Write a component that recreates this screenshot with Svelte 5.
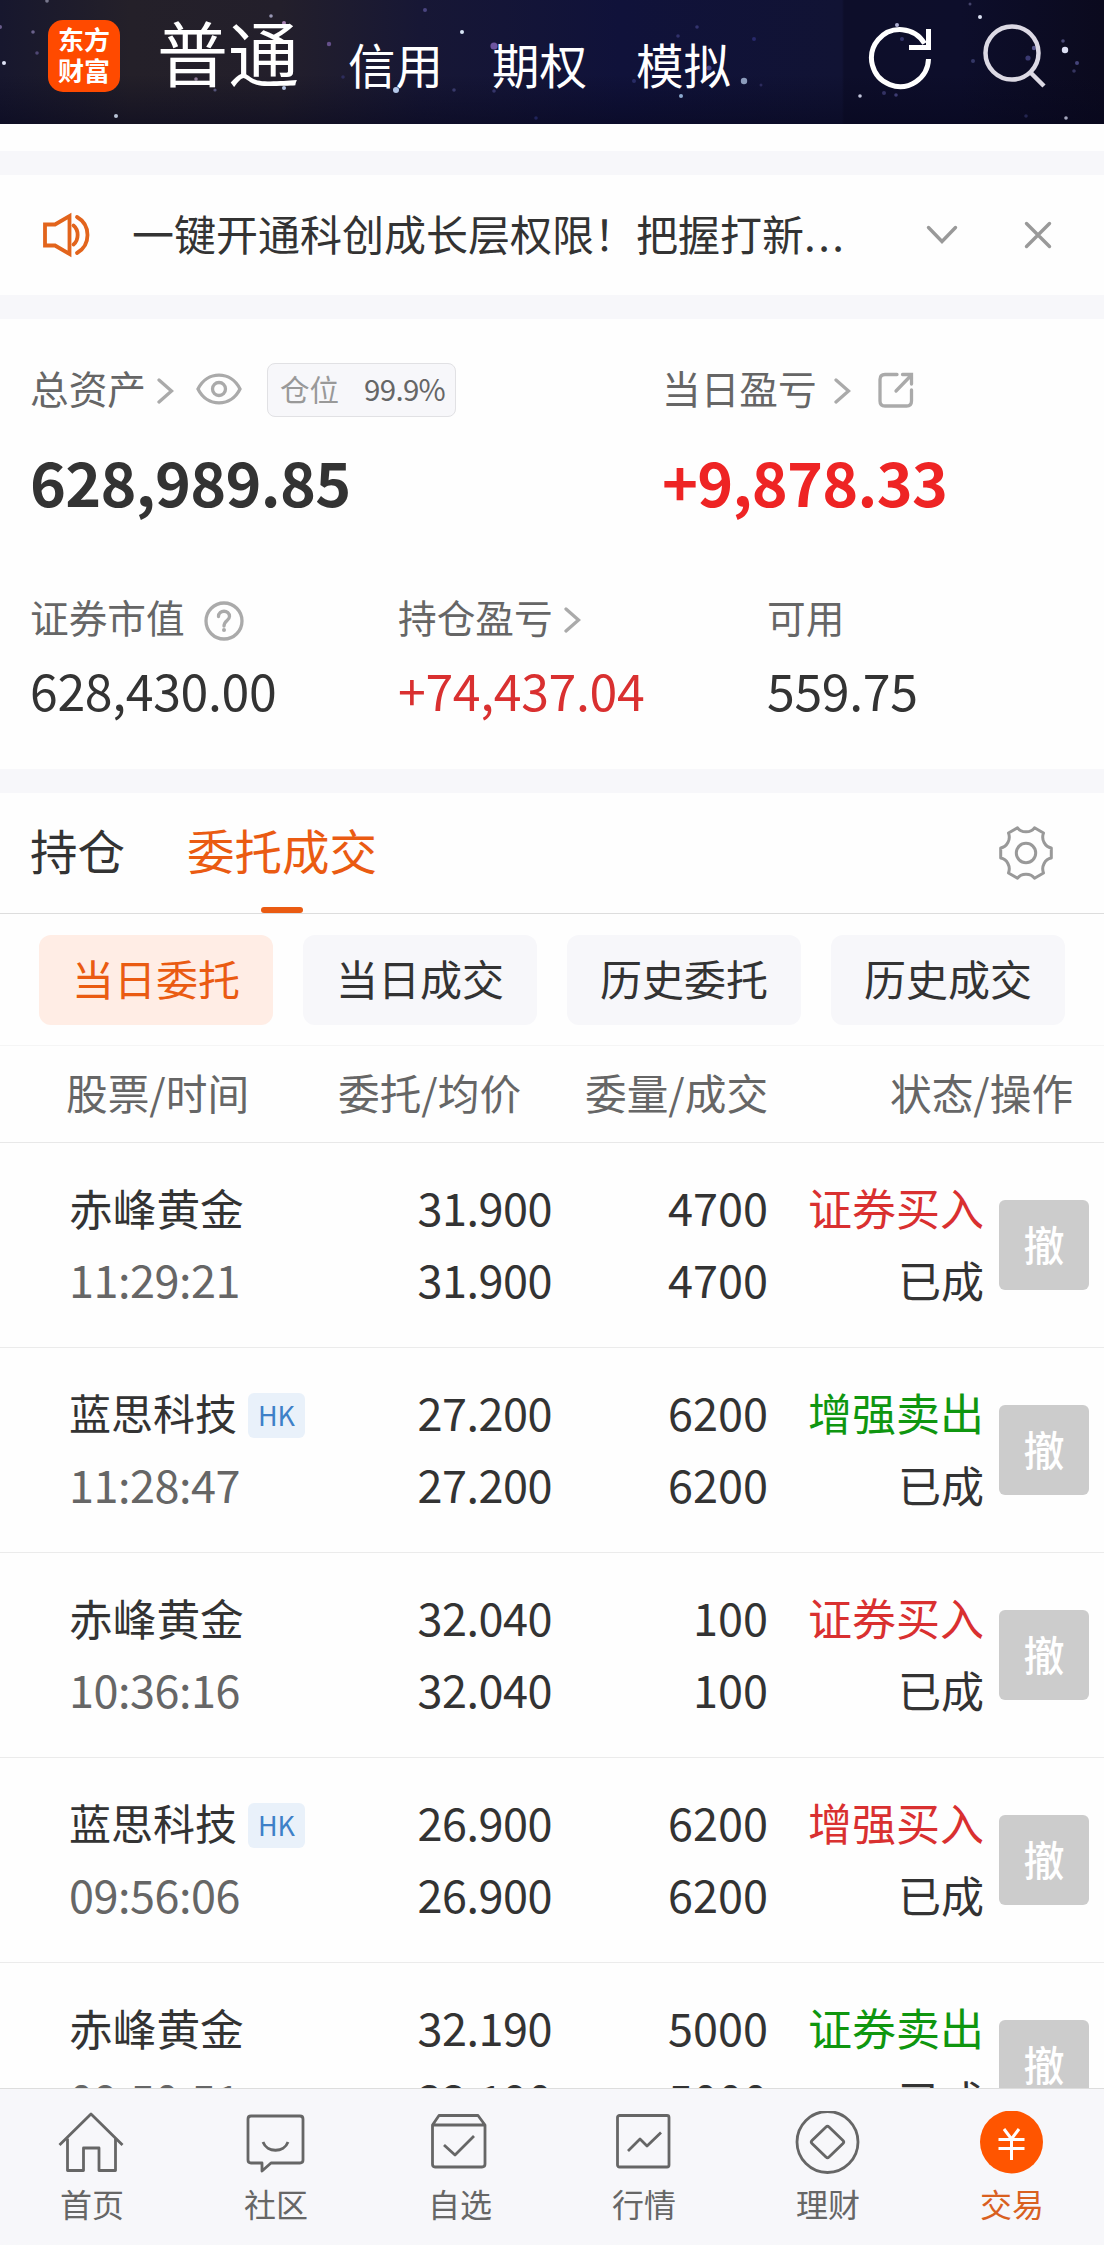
<script lang="ts">
  interface Order {
    name: string;
    hk: boolean;
    time: string;
    price: string;
    volume: string;
    action: string;
    side: 'buy' | 'sell';
  }

  let orders: Order[] = [
    { name: '赤峰黄金', hk: false, time: '11:29:21', price: '31.900', volume: '4700', action: '证券买入', side: 'buy' },
    { name: '蓝思科技', hk: true, time: '11:28:47', price: '27.200', volume: '6200', action: '增强卖出', side: 'sell' },
    { name: '赤峰黄金', hk: false, time: '10:36:16', price: '32.040', volume: '100', action: '证券买入', side: 'buy' },
    { name: '蓝思科技', hk: true, time: '09:56:06', price: '26.900', volume: '6200', action: '增强买入', side: 'buy' },
    { name: '赤峰黄金', hk: false, time: '09:50:51', price: '32.190', volume: '5000', action: '证券卖出', side: 'sell' },
  ];

  let filters = ['当日委托', '当日成交', '历史委托', '历史成交'];
  let activeFilter = '当日委托';

  let navItems = [
    { id: 'home', label: '首页' },
    { id: 'community', label: '社区' },
    { id: 'favorites', label: '自选' },
    { id: 'quotes', label: '行情' },
    { id: 'wealth', label: '理财' },
    { id: 'trade', label: '交易' },
  ];
  let activeNav = 'trade';

  // x, y, radius, color
  const stars: [number, number, number, string][] = [
    [4, 63, 2, '#dfe3f5'], [33, 32, 1.8, '#6b628c'], [37, 53, 1.8, '#4f4774'], [0, 27, 2, '#6a5d8c'],
    [116, 116, 2, '#b9c3d6'], [47, 1, 1.8, '#77778c'], [271, 16, 1.8, '#9a98b5'], [284, 23, 2, '#a884b4'],
    [284, 88, 2, '#b4c4e4'], [196, 79, 1.8, '#8f7b98'], [215, 90, 1.6, '#55547a'], [329, 44, 2.2, '#65508a'],
    [343, 77, 1.8, '#2e2d5c'], [396, 90, 3, '#b4c8ea'], [425, 10, 2, '#4a4580'], [462, 32, 2, '#d8e6f6'],
    [454, 90, 1.8, '#38396a'], [494, 46, 3.6, '#6d559f'], [494, 91, 1.8, '#35356a'], [536, 118, 1.8, '#20245a'],
    [678, 36, 1.8, '#31316b'], [697, 27, 1.8, '#33346e'], [744, 81, 3.2, '#8b9bbb'], [681, 96, 2, '#8ca9cf'],
    [754, 39, 2, '#28296a'], [761, 85, 1.5, '#2c2b5c'], [634, 81, 2, '#292c66'], [709, 68, 2.5, '#44458c'],
    [897, 25, 2, '#aeb0d2'], [902, 39, 2, '#33346b'], [860, 96, 1.8, '#c3c6dc'], [884, 93, 2, '#333263'],
    [896, 95, 1.8, '#3d3c72'], [980, 17, 2, '#dce2f4'], [970, 4, 1.5, '#44436b'], [973, 61, 2, '#343766'],
    [1028, 58, 2.6, '#3a3971'], [1034, 48, 2.2, '#57568d'], [1065, 50, 3.2, '#dcdff4'], [1063, 41, 1.8, '#4a4a77'],
    [1077, 63, 2, '#45447a'], [1074, 71, 1.8, '#35345f'], [1066, 118, 1.8, '#a5a7bd'], [1026, 116, 1.8, '#23254f'],
  ];
</script>

{#snippet arrow()}
  <svg class="arrow" width="18" height="28" viewBox="0 0 18 28">
    <path d="M2 3 L14.500 14 L2 25" />
  </svg>
{/snippet}

<div class="app">
  <header class="topbar">
    <svg class="sky" width="1104" height="124" viewBox="0 0 1104 124">
      {#each stars as [x, y, r, color]}
        <circle cx={x} cy={y} {r} fill={color} />
      {/each}
    </svg>
    <div class="logo">东方财富</div>
    <nav class="accounts">
      <span class="current">普通</span>
      <span>信用</span>
      <span>期权</span>
      <span>模拟</span>
    </nav>
    <svg class="refresh" width="66" height="66" viewBox="0 0 66 66">
      <path d="M60.500 34 A28.500 28.500 0 1 1 56.500 18.500" />
      <path d="M60.500 4 V22.500 H41" />
    </svg>
    <svg class="search" width="66" height="66" viewBox="0 0 66 66">
      <circle cx="31" cy="30" r="26.500" />
      <path d="M49.500 49.500 L63 63" />
    </svg>
  </header>

  <div class="gap first"></div>

  <section class="notice">
    <svg class="speaker" width="50" height="46" viewBox="0 0 50 46">
      <path d="M3 12.500 H13 L27.500 4 V42 L13 33.500 H3 Z" />
      <path d="M31.500 13.500 C37 18 37 28 31.500 32.500" />
      <path d="M35 5 C49 13 49 33 35 41" />
    </svg>
    <p>一键开通科创成长层权限！把握打新<span>...</span></p>
    <svg class="grey down" width="34" height="22" viewBox="0 0 34 22">
      <path d="M3.500 3.500 L17 17.500 L30.500 3.500" />
    </svg>
    <svg class="grey close" width="30" height="30" viewBox="0 0 30 30">
      <path d="M3.500 3.500 L26.500 26.500 M26.500 3.500 L3.500 26.500" />
    </svg>
  </section>

  <div class="gap"></div>

  <section class="assets">
    <div class="main-row">
      <div class="cell">
        <div class="label">
          总资产{@render arrow()}
          <svg class="eye" width="48" height="34" viewBox="0 0 48 34">
            <path d="M3 17 C12 -1.500 36 -1.500 45 17 C36 35.500 12 35.500 3 17 Z" />
            <circle cx="24" cy="17" r="6.500" />
          </svg>
          <div class="position"><span>仓位</span><b>99.9%</b></div>
        </div>
        <div class="big">628,989.85</div>
      </div>
      <div class="cell">
        <div class="label">
          当日盈亏<i></i>{@render arrow()}
          <svg class="share" width="36" height="36" viewBox="0 0 36 36">
            <path d="M19 2.500 H7 Q2 2.500 2 7.500 V29 Q2 34 7 34 H28.500 Q33.500 34 33.500 29 V18" />
            <path d="M18 19 L33 3.500 M24.500 2.500 H33.500 V12" />
          </svg>
        </div>
        <div class="big up">+9,878.33</div>
      </div>
    </div>
    <div class="sub-row">
      <div class="cell">
        <div class="label">
          证券市值
          <svg class="help" width="40" height="40" viewBox="0 0 40 40">
            <circle cx="20" cy="20" r="18" />
            <path d="M14.500 15.500 C14.500 8.500 25.500 8.500 25.500 15.500 C25.500 19.500 20 19.500 20 25" />
            <circle class="dot" cx="20" cy="29" r="2" />
          </svg>
        </div>
        <div class="value">628,430.00</div>
      </div>
      <div class="cell">
        <div class="label">持仓盈亏{@render arrow()}</div>
        <div class="value up">+74,437.04</div>
      </div>
      <div class="cell">
        <div class="label">可用</div>
        <div class="value">559.75</div>
      </div>
    </div>
  </section>

  <div class="gap"></div>

  <section class="tabs">
    <span class="tab">持仓</span>
    <span class="tab active">委托成交</span>
    <svg class="gear" width="54" height="54" viewBox="0 0 54 54">
      <path d="M18.500 1.800 C22 7.200 32 7.200 35.500 1.800 L44.500 7 C42 13.500 46 21 52.300 22 V32 C46 33 42 40.500 44.500 47 L35.500 52.200 C32 46.800 22 46.800 18.500 52.200 L9.500 47 C12 40.500 8 33 1.700 32 V22 C8 21 12 13.500 9.500 7 Z" />
      <circle cx="27" cy="27" r="9.700" />
    </svg>
  </section>

  <section class="filters">
    {#each filters as filter}
      <button class:active={filter === activeFilter}>{filter}</button>
    {/each}
  </section>

  <div class="columns">
    <span>股票/时间</span>
    <span>委托/均价</span>
    <span>委量/成交</span>
    <span>状态/操作</span>
  </div>

  <main class="orders">
    {#each orders as order}
      <div class="order">
        <div class="stock">
          <div class="name" class:short={order.hk}>
            {order.name}
            {#if order.hk}<span class="hk">HK</span>{/if}
          </div>
          <div class="time">{order.time}</div>
        </div>
        <div class="num price">
          <div>{order.price}</div>
          <div>{order.price}</div>
        </div>
        <div class="num">
          <div>{order.volume}</div>
          <div>{order.volume}</div>
        </div>
        <div class="status">
          <div class={order.side}>{order.action}</div>
          <div class="done">已成</div>
        </div>
        <button class="cancel">撤</button>
      </div>
    {/each}
  </main>

  <nav class="bottom">
    {#each navItems as item}
      <div class="item" class:active={item.id === activeNav}>
        <svg width="68" height="68" viewBox="0 0 68 68">
          {#if item.id === 'home'}
            <path d="M1.500 34 L33 3 L64.500 34" />
            <path d="M9.500 27.500 V59.500 H25.500 V37 H41 V59.500 H57.500 V27.500" />
          {:else if item.id === 'community'}
            <path d="M9 5 H58 Q61 5 61 8 V49 Q61 52 58 52 H29 L20 60 V52 H9 Q6 52 6 49 V8 Q6 5 9 5 Z" />
            <path d="M21 31 C25 42 42 42 46 31" />
          {:else if item.id === 'favorites'}
            <path d="M13 4.500 H52 L59 14 V53 Q59 56 56 56 H9 Q6.500 56 6.500 53 V14 Z M6.500 14 H59" />
            <path d="M18 34 L29 44 L48 25" />
          {:else if item.id === 'quotes'}
            <rect x="7.500" y="4.500" width="51.500" height="51.500" rx="2" />
            <path d="M18 40 L30 28 L37 35 L51 21.500" />
          {:else if item.id === 'wealth'}
            <circle cx="33.500" cy="31" r="30.500" />
            <path d="M32 16 Q33.500 14.500 35 16 L49 29.500 Q50.500 31 49 32.500 L35 46 Q33.500 47.500 32 46 L18 32.500 Q16.500 31 18 29.500 Z" />
          {:else}
            <circle class="coin" cx="33.500" cy="31" r="31.500" />
            <path class="yen" d="M26 18 L33.500 28 L41 18 M20.500 28.500 H46.500 M20.500 37.500 H46.500 M33.500 28 V49" />
          {/if}
        </svg>
        <span>{item.label}</span>
      </div>
    {/each}
  </nav>
</div>

<style>
  :global(body) {
    margin: 0;
    background: #fff;
  }

  .app {
    display: flex;
    flex-direction: column;
    width: 1104px;
    height: 2245px;
    overflow: hidden;
    background: #fefefe;
    color: #333;
    font-family: 'Noto Sans CJK SC', sans-serif;
  }

  svg {
    display: block;
    flex: none;
    fill: none;
  }

  button {
    border: 0;
    padding: 0;
    font-family: inherit;
  }

  /* top bar */
  .topbar {
    position: relative;
    flex: none;
    display: flex;
    align-items: flex-start;
    box-sizing: border-box;
    height: 124px;
    padding-left: 48px;
    background:
      linear-gradient(to bottom, rgba(8, 8, 30, 0) 60%, rgba(6, 6, 28, 0.5)),
      linear-gradient(to right, #17172e 0, #242029 130px, #231f2b 280px, #171735 420px, #10123a 620px, #111334 842px, #0d0e2a 844px, #0d0e2b 960px, #0b0a1e 1104px);
    color: #fff;
  }

  .sky {
    position: absolute;
    left: 0;
    top: 0;
  }

  .logo {
    position: relative;
    box-sizing: border-box;
    width: 72px;
    height: 72px;
    margin-top: 20px;
    padding: 3px 10px 0;
    border-radius: 15px;
    background: #ff4a00;
    font-size: 26px;
    font-weight: 700;
    line-height: 31px;
  }

  .accounts {
    position: relative;
    display: flex;
    align-items: flex-start;
    margin-left: 37px;
    font-size: 47.5px;
    line-height: 127px;
  }

  .accounts span {
    margin-right: 49px;
  }

  .accounts .current {
    font-size: 71px;
    line-height: 101px;
  }

  .refresh {
    position: relative;
    margin: 25px 0 0 88px;
    stroke: #fff;
    stroke-width: 5;
  }

  .search {
    position: relative;
    margin: 23px 0 0 47px;
    stroke: #dcd9e4;
    stroke-width: 4.5;
  }

  .gap {
    flex: none;
    height: 24px;
    background: #f7f7fa;
  }

  .gap.first {
    margin-top: 27px;
  }

  /* notice */
  .notice {
    flex: none;
    display: flex;
    align-items: center;
    height: 120px;
    padding-left: 42px;
  }

  .speaker {
    stroke: #e2641c;
    stroke-width: 3.8;
    stroke-linecap: round;
  }

  .notice p {
    width: 793px;
    margin: -5px 0 0 40px;
    font-size: 42px;
    line-height: 60px;
    white-space: nowrap;
  }

  .notice p span {
    letter-spacing: 2.5px;
  }

  .grey {
    stroke: #999;
    stroke-width: 3.4;
    stroke-linecap: round;
  }

  .close {
    margin-left: 64px;
  }

  /* assets */
  .assets {
    flex: none;
    height: 450px;
  }

  .main-row,
  .sub-row {
    display: grid;
    padding-left: 30px;
  }

  .main-row {
    grid-template-columns: 632px 1fr;
    padding-top: 42px;
  }

  .sub-row {
    grid-template-columns: 368px 369px 1fr;
    padding-top: 74px;
  }

  .label {
    display: flex;
    align-items: center;
    height: 52px;
    color: #666;
    font-size: 38.7px;
    line-height: 52px;
  }

  .label i {
    width: 6px;
  }

  .arrow,
  .eye,
  .share,
  .help {
    stroke: #aaa;
    stroke-width: 3.3;
    stroke-linecap: round;
  }

  .arrow {
    margin: 7px 0 0 11px;
  }

  .eye {
    margin: 4px 0 0 20px;
  }

  .share {
    margin: 6px 0 0 26px;
  }

  .help {
    margin: 9px 0 0 19px;
  }

  .help .dot {
    fill: #aaa;
    stroke: none;
  }

  .position {
    display: flex;
    align-items: center;
    justify-content: space-between;
    box-sizing: border-box;
    width: 189px;
    height: 54px;
    margin: 6px 0 0 24px;
    padding: 0 10px 4px 12px;
    border: 1px solid #e1e1e4;
    border-radius: 8px;
    background: #f7f7fa;
    color: #999;
    font-size: 29.5px;
  }

  .position b {
    color: #666;
    font-weight: 400;
    letter-spacing: -0.7px;
  }

  .big {
    margin-top: 33px;
    font-size: 61px;
    font-weight: 700;
    letter-spacing: -0.7px;
    line-height: 70px;
  }

  .value {
    margin-top: 22px;
    font-size: 50px;
    letter-spacing: -0.35px;
    line-height: 50px;
  }

  .up {
    color: #d93030;
  }

  .big.up {
    color: #ee2424;
  }

  /* tabs */
  .tabs {
    flex: none;
    display: flex;
    align-items: center;
    box-sizing: border-box;
    height: 121px;
    padding: 0 51px 0 30px;
    border-bottom: 1px solid #ddd;
  }

  .tab {
    position: relative;
    margin: -6px 62px 0 0;
    font-size: 47.5px;
    line-height: 70px;
  }

  .tab.active {
    color: #ea5b12;
  }

  .tab.active::after {
    content: '';
    position: absolute;
    left: 74px;
    bottom: -28px;
    width: 42px;
    height: 6px;
    border-radius: 3px;
    background: #ea5b12;
  }

  .gear {
    margin-left: auto;
    stroke: #999;
    stroke-width: 3;
    stroke-linejoin: round;
  }

  /* filter buttons */
  .filters {
    flex: none;
    display: flex;
    gap: 30px;
    box-sizing: border-box;
    height: 132px;
    padding: 21px 39px 0;
    border-bottom: 1px solid #f5f5f5;
  }

  .filters button {
    width: 234px;
    height: 90px;
    padding-bottom: 5px;
    border-radius: 12px;
    background: #f7f7fa;
    color: #333;
    font-size: 42px;
  }

  .filters .active {
    background: #ffede5;
    color: #ea5b12;
  }

  .columns {
    flex: none;
    display: grid;
    grid-template-columns: 272px 247px 305px 1fr;
    box-sizing: border-box;
    height: 97px;
    padding-left: 66px;
    border-bottom: 1px solid #e8e8e8;
    color: #666;
    font-size: 41.7px;
    line-height: 92px;
  }

  /* orders */
  .orders {
    flex: none;
    height: 945px;
    overflow: hidden;
  }

  .order {
    display: grid;
    grid-template-columns: 221px 262px 216px 216px 90px;
    box-sizing: border-box;
    height: 205px;
    padding: 28px 0 0 69px;
    border-bottom: 1px solid #ebebeb;
    font-size: 45px;
    line-height: 72px;
    white-space: nowrap;
  }

  .name {
    display: flex;
    align-items: center;
    height: 72px;
    font-size: 43.7px;
  }

  .name.short {
    font-size: 42px;
  }

  .hk {
    flex: none;
    width: 57px;
    height: 45px;
    margin: 6px 0 0 11px;
    border-radius: 6px;
    background: #e9f1fa;
    color: #3e80c8;
    font-size: 27px;
    line-height: 43px;
    text-align: center;
  }

  .time {
    color: #666;
    letter-spacing: -0.5px;
  }

  .num,
  .status {
    text-align: right;
  }

  .price {
    letter-spacing: -0.5px;
  }

  .status {
    font-size: 44px;
  }

  .status .done {
    font-size: 43px;
  }

  .buy {
    color: #d93030;
  }

  .sell {
    color: #0f960f;
  }

  .cancel {
    width: 90px;
    height: 90px;
    margin: 29px 0 0 15px;
    padding-bottom: 4px;
    border-radius: 6px;
    background: #ccc;
    color: #fff;
    font-size: 41px;
    font-weight: 500;
  }

  /* bottom navigation */
  .bottom {
    flex: none;
    display: grid;
    grid-template-columns: repeat(6, 184px);
    box-sizing: border-box;
    height: 158px;
    border-top: 1px solid #ddd;
    background: #f7f7fa;
  }

  .item {
    display: flex;
    flex-direction: column;
    align-items: center;
    padding-top: 22px;
    color: #666;
    font-size: 32px;
    line-height: 48px;
  }

  .item svg {
    stroke: #666;
    stroke-width: 2.8;
    stroke-linejoin: round;
  }

  .item.active {
    color: #d9601f;
  }

  .item .coin {
    fill: #ff5500;
    stroke: none;
  }

  .item .yen {
    stroke: #fff;
    stroke-width: 3;
  }
</style>
